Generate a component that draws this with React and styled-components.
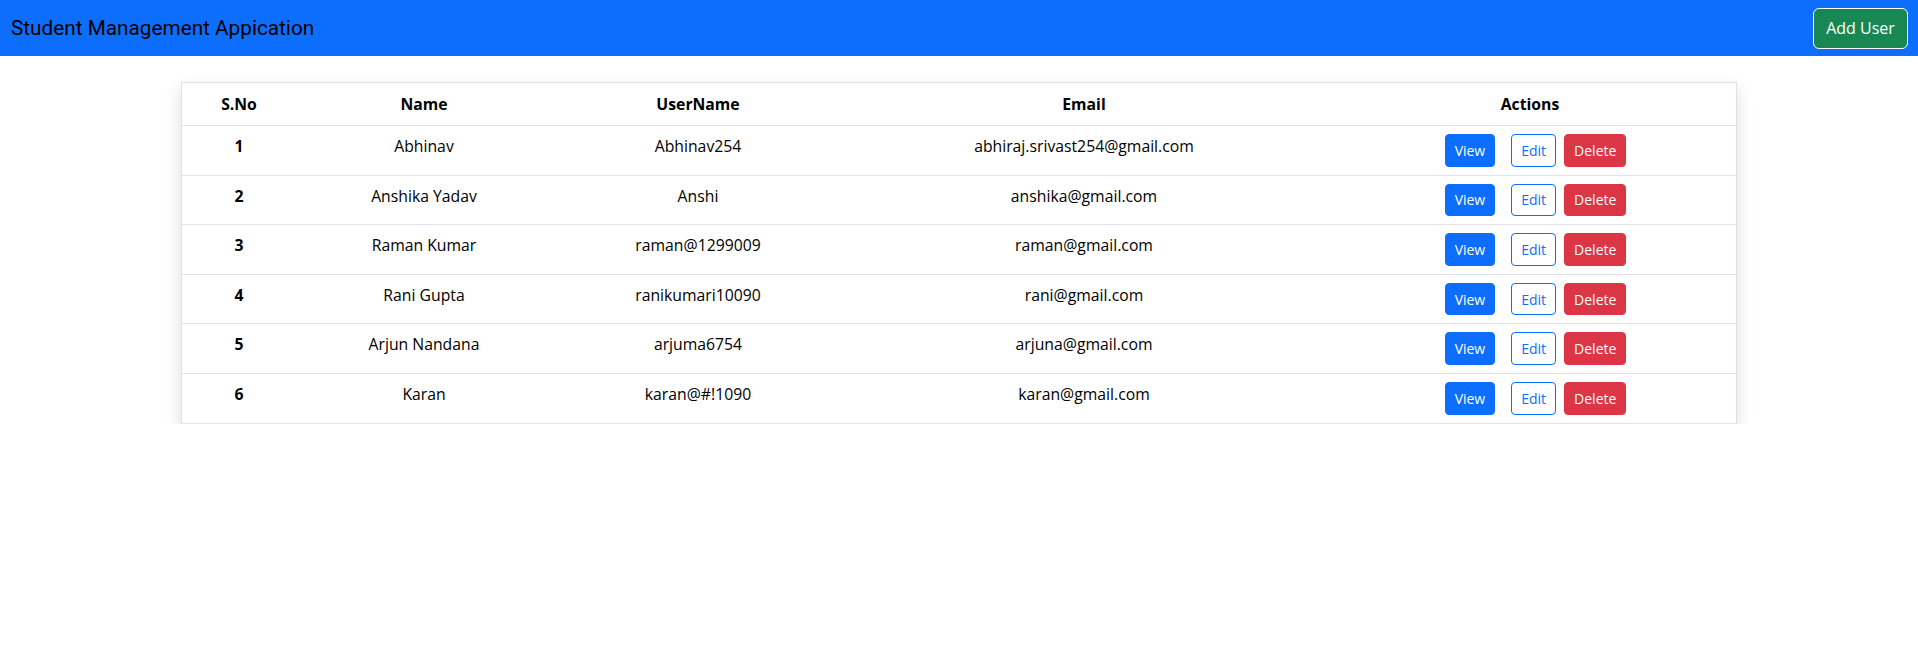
import React from 'react';
import styled, { createGlobalStyle } from 'styled-components';

const GlobalStyle = createGlobalStyle`
  body {
    margin: 0;
    background: #fff;
    font-family: "Open Sans", "Noto Sans", sans-serif;
  }
`;

const NavBar = styled.nav`
  height: 56px;
  background-color: #0d6efd;
  display: flex;
  align-items: center;
  justify-content: space-between;
  padding: 0 10px 0 11px;
  box-sizing: border-box;
`;

const Brand = styled.span`
  font-family: Roboto, sans-serif;
  font-size: 20.75px;
  color: #000;
`;

const AddButton = styled.button`
  font-family: "Open Sans", sans-serif;
  font-size: 16px;
  color: #fff;
  background-color: #198754;
  border: 1px solid #fff;
  border-radius: 6px;
  height: 41px;
  width: 95px;
  padding: 0;
  cursor: pointer;
`;

const Card = styled.div`
  width: 1556px;
  margin: 26px auto 0;
  border: 1px solid #dee2e6;
  box-shadow: 0 7px 16px rgba(0, 0, 0, 0.14);
  box-sizing: border-box;
`;

const Table = styled.table`
  width: 100%;
  border-collapse: collapse;
  table-layout: fixed;
  color: #000;
  font-size: 15.75px;
`;

const Th = styled.th`
  font-weight: 700;
  padding: 9px 8px 9px;
  line-height: 24px;
  text-align: center;
  border-bottom: 1px solid #dee2e6;
`;

const Td = styled.td`
  padding: 8px;
  line-height: 24px;
  text-align: center;
  vertical-align: top;
  font-weight: ${({ bold }) => (bold ? 700 : 400)};
`;

const Row = styled.tr`
  border-bottom: ${({ last }) => (last ? 'none' : '1px solid #dee2e6')};
`;

const Actions = styled.div`
  display: flex;
  justify-content: center;
  gap: 8px;
  padding-left: 11px;
`;

const SmallButton = styled.button`
  font-family: "Open Sans", sans-serif;
  font-size: 14px;
  height: 32.6px;
  padding: 0 9px;
  border-radius: 4px;
  border: 1px solid ${({ color }) => color};
  background-color: ${({ outline, color }) => (outline ? '#fff' : color)};
  color: ${({ outline, color }) => (outline ? color : '#fff')};
  margin-right: ${({ spaced }) => (spaced ? '8px' : '0')};
  cursor: pointer;
`;

const users = [
  { name: 'Abhinav', username: 'Abhinav254', email: 'abhiraj.srivast254@gmail.com' },
  { name: 'Anshika Yadav', username: 'Anshi', email: 'anshika@gmail.com' },
  { name: 'Raman Kumar', username: 'raman@1299009', email: 'raman@gmail.com' },
  { name: 'Rani Gupta', username: 'ranikumari10090', email: 'rani@gmail.com' },
  { name: 'Arjun Nandana', username: 'arjuma6754', email: 'arjuna@gmail.com' },
  { name: 'Karan', username: 'karan@#!1090', email: 'karan@gmail.com' },
];

export default function App() {
  return (
    <>
      <GlobalStyle />
      <NavBar>
        <Brand>Student Management Appication</Brand>
        <AddButton>Add User</AddButton>
      </NavBar>
      <Card>
        <Table>
          <colgroup>
            <col style={{ width: 114 }} />
            <col style={{ width: 256 }} />
            <col style={{ width: 292 }} />
            <col style={{ width: 480 }} />
            <col />
          </colgroup>
          <thead>
            <tr>
              <Th>S.No</Th>
              <Th>Name</Th>
              <Th>UserName</Th>
              <Th>Email</Th>
              <Th>Actions</Th>
            </tr>
          </thead>
          <tbody>
            {users.map((u, i) => (
              <Row key={i} last={i === users.length - 1}>
                <Td bold>{i + 1}</Td>
                <Td>{u.name}</Td>
                <Td>{u.username}</Td>
                <Td>{u.email}</Td>
                <Td>
                  <Actions>
                    <SmallButton color="#0d6efd" spaced>View</SmallButton>
                    <SmallButton color="#0d6efd" outline>Edit</SmallButton>
                    <SmallButton color="#dc3545">Delete</SmallButton>
                  </Actions>
                </Td>
              </Row>
            ))}
          </tbody>
        </Table>
      </Card>
    </>
  );
}
